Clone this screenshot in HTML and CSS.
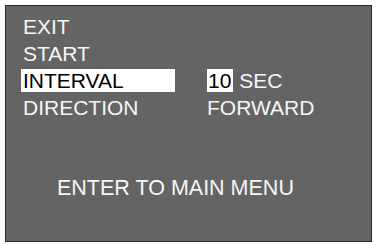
FILE: index.html
```html
<!DOCTYPE html>
<html>
<head>
<meta charset="utf-8">
<link rel="stylesheet" href="styles.css">
</head>
<body>
<div class="screen">
  <div class="menu">
    <div class="row"><span class="label">EXIT</span></div>
    <div class="row"><span class="label">START</span></div>
    <div class="row"><span class="label selected">INTERVAL</span><span class="value"><span class="num">10</span> SEC</span></div>
    <div class="row"><span class="label">DIRECTION</span><span class="value">FORWARD</span></div>
  </div>
  <div class="footer">ENTER TO MAIN MENU</div>
</div>
</body>
</html>
```
FILE: styles.css
```css
html, body {
  margin: 0;
  padding: 0;
  background: #ffffff;
}
body {
  font-family: "Liberation Sans", Arial, sans-serif;
}
.screen {
  margin: 5px 0 0 5px;
  width: 365px;
  height: 235px;
  background: #646464;
  border: 1px solid #2a2a2a;
  color: #f6f6f6;
  box-sizing: content-box;
}
.menu {
  padding: 7px 0 0 15px;
}
.row {
  height: 27px;
  display: flex;
  align-items: center;
  font-size: 21px;
  line-height: 23px;
}
.label {
  width: 154px;
  padding-left: 2px;
  box-sizing: border-box;
  white-space: nowrap;
}
.selected {
  background: #ffffff;
  color: #000000;
}
.value {
  margin-left: 32px;
  white-space: nowrap;
}
.num {
  display: inline-block;
  background: #ffffff;
  color: #000000;
  padding: 0 2px 0 1px;
}
.footer {
  margin-top: 55px;
  padding-left: 51px;
  font-size: 21.5px;
  line-height: 24px;
  white-space: nowrap;
}
```
